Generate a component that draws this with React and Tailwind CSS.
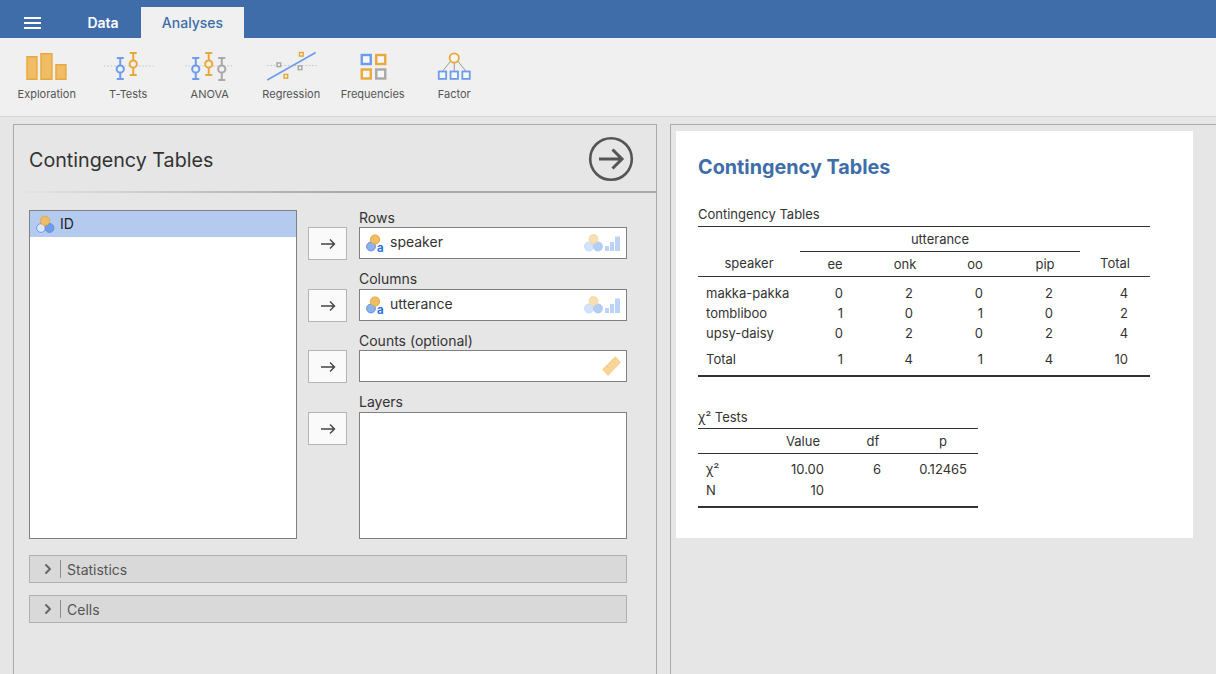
import { ChevronRight } from 'lucide-react';

const ORANGE = '#e8a93a';
const ORANGE_FILL = '#f0bd66';
const BLUE = '#6c9ceb';
const GRAY = '#a8a8a8';

function Whisker({ x, top, bottom, cy, color }) {
  return (
    <g stroke={color} strokeWidth="2" fill="#f0f0f0">
      <path d={`M${x - 3.5} ${top}h7M${x - 3.5} ${bottom}h7M${x} ${top}V${bottom}`} />
      <circle cx={x} cy={cy} r="3.6" />
    </g>
  );
}

function Dots({ x1, x2, y }) {
  return <path d={`M${x1} ${y}H${x2}`} stroke="#b9c3cf" strokeWidth="1" strokeDasharray="1.5 2" />;
}

function Box({ x, y, s, color, w = 2.4 }) {
  return <rect x={x} y={y} width={s} height={s} fill="#f6f6f6" stroke={color} strokeWidth={w} />;
}

function ExplorationIcon() {
  return (
    <svg width="60" height="32" viewBox="16.75 50 60 32">
      <g fill={ORANGE_FILL} stroke={ORANGE} strokeWidth="1.4">
        <rect x="26.7" y="56.7" width="10" height="22.6" />
        <rect x="40.7" y="53.7" width="11" height="25.6" />
        <rect x="55.7" y="64.7" width="10" height="14.6" />
      </g>
    </svg>
  );
}

function TTestsIcon() {
  return (
    <svg width="60" height="32" viewBox="98.25 50 60 32">
      <Dots x1={104} x2={154} y={66} />
      <Whisker x={120.5} top={58} bottom={79} cy={69} color={BLUE} />
      <Whisker x={133.5} top={53} bottom={75} cy={64} color={ORANGE} />
    </svg>
  );
}

function AnovaIcon() {
  return (
    <svg width="60" height="32" viewBox="179.75 50 60 32">
      <Dots x1={185} x2={234} y={66} />
      <Whisker x={195.5} top={58} bottom={79} cy={69} color={BLUE} />
      <Whisker x={208.5} top={53} bottom={75} cy={64} color={ORANGE} />
      <Whisker x={221.5} top={58} bottom={80} cy={69} color={GRAY} />
    </svg>
  );
}

function RegressionIcon() {
  return (
    <svg width="60" height="32" viewBox="261.25 50 60 32">
      <Dots x1={267} x2={317} y={65.5} />
      <path d="M267.5 80L316 52.5" stroke={BLUE} strokeWidth="1.6" />
      <Box x={299.8} y={52.5} s={3.6} color={ORANGE} w={1.5} />
      <Box x={277.3} y={63} s={3.6} color={GRAY} w={1.5} />
      <Box x={298.5} y={66} s={3.6} color={GRAY} w={1.5} />
      <Box x={284.3} y={74.5} s={3.6} color={ORANGE} w={1.5} />
    </svg>
  );
}

function FrequenciesIcon() {
  return (
    <svg width="60" height="32" viewBox="342.75 50 60 32">
      <Box x={361.5} y={55} s={9} color={BLUE} />
      <Box x={376} y={55} s={9} color={ORANGE} />
      <Box x={361.5} y={69.5} s={9} color={ORANGE} />
      <Box x={376} y={69.5} s={9} color={GRAY} />
    </svg>
  );
}

function FactorIcon() {
  return (
    <svg width="60" height="32" viewBox="424.25 50 60 32">
      <path d="M451 61L443 71M454.5 62V71M458 61L466 71" stroke="#999" strokeWidth="1" />
      <circle cx="454.5" cy="58" r="4.6" fill="#f6f6f6" stroke={ORANGE} strokeWidth="1.8" />
      <Box x={439} y={71.5} s={7.4} color={BLUE} w={1.8} />
      <Box x={450.8} y={71.5} s={7.4} color={BLUE} w={1.8} />
      <Box x={462.6} y={71.5} s={7.4} color={BLUE} w={1.8} />
    </svg>
  );
}

function IdIcon() {
  return (
    <svg width="19" height="19" viewBox="0 0 19 19" className="shrink-0">
      <circle cx="5" cy="13" r="4.4" fill="#dbe6f9" stroke={BLUE} strokeWidth="1" />
      <circle cx="13.5" cy="13" r="4.4" fill={BLUE} stroke="#5b8de0" strokeWidth="1" />
      <circle cx="9" cy="5.8" r="4.6" fill={ORANGE_FILL} stroke={ORANGE} strokeWidth="1" />
    </svg>
  );
}

function NominalTextIcon() {
  return (
    <svg width="19" height="19" viewBox="0 0 19 19" className="shrink-0">
      <circle cx="5" cy="12.5" r="4.4" fill="#8db4f2" stroke="#5b8de0" strokeWidth="1" />
      <circle cx="9" cy="5.5" r="4.6" fill={ORANGE_FILL} stroke={ORANGE} strokeWidth="1" />
      <text x="11" y="17.5" fontSize="11.5" fontWeight="700" fill="#2f73d9" fontFamily="Inter, sans-serif">a</text>
    </svg>
  );
}

function AllowedTypesIcon() {
  return (
    <svg width="37" height="18" viewBox="0 0 37 18" className="shrink-0">
      <circle cx="5" cy="12.5" r="4.5" fill="#d5e3fa" stroke="#c3d6f6" strokeWidth="0.8" />
      <circle cx="14" cy="12.5" r="4.5" fill="#b4cdf5" stroke="#a9c5f2" strokeWidth="0.8" />
      <circle cx="9.5" cy="5" r="4.5" fill="#f8dfb2" stroke="#f4d59d" strokeWidth="0.8" />
      <path d="M21 17V12h4v5zM26 17V8h4v9zM31 17V2.5h5V17z" fill="#bcd2f6" />
    </svg>
  );
}

function RulerIcon() {
  return (
    <svg width="19" height="20" viewBox="0 0 19 20" className="shrink-0">
      <path d="M0.5 13.5L13.5 0.5L18.5 6.5L6 19.5z" fill="#f8d596" stroke="#f4cb80" strokeWidth="0.6" />
      <path d="M4.5 9.5l2 2M7 7l1.5 1.5M9.5 4.5l2 2M12 2.5l1.5 1.5" stroke="#eebf6d" strokeWidth="0.6" />
    </svg>
  );
}

function RunArrow() {
  return (
    <svg width="46" height="46" viewBox="0 0 46 46">
      <circle cx="23" cy="23" r="20.8" fill="none" stroke="#555" strokeWidth="2.6" />
      <path d="M11 23H34M24.5 13.5L34 23L24.5 32.5" fill="none" stroke="#555" strokeWidth="3" />
    </svg>
  );
}

function TransferButton() {
  return (
    <button className="flex h-[33px] w-[39px] items-center justify-center border border-[#b4b4b4] bg-[#fafafa]">
      <svg width="16" height="12" viewBox="0 0 16 12" fill="none" stroke="#444" strokeWidth="1.4">
        <path d="M1 6H14.5M10 1.5L14.5 6L10 10.5" />
      </svg>
    </button>
  );
}

function TargetRow({ label, children, className, boxClass, labelClass = 'leading-[15px]' }) {
  return (
    <div className={className}>
      <div className={`h-[17px] pl-[51px] text-[14px] text-[#333] ${labelClass}`}>{label}</div>
      <div className="flex items-start gap-[12px]">
        <TransferButton />
        <div className={`flex w-[268px] items-center border border-[#808080] bg-white pl-[6px] pr-[5px] ${boxClass}`}>
          {children}
        </div>
      </div>
    </div>
  );
}

function Accordion({ label, className }) {
  return (
    <div className={`flex h-[28px] w-[598px] items-center border border-[#b0b0b0] bg-[#d9d9d9] text-[#555] ${className}`}>
      <ChevronRight size={16} strokeWidth={3} className="ml-[10px] text-[#666]" />
      <div className="ml-[4px] h-[18px] w-px bg-[#8c8c8c]"></div>
      <span className="ml-[6px] text-[14px]">{label}</span>
    </div>
  );
}

const ribbon = [
  { label: 'Exploration', icon: <ExplorationIcon /> },
  { label: 'T-Tests', icon: <TTestsIcon /> },
  { label: 'ANOVA', icon: <AnovaIcon /> },
  { label: 'Regression', icon: <RegressionIcon /> },
  { label: 'Frequencies', icon: <FrequenciesIcon /> },
  { label: 'Factor', icon: <FactorIcon /> },
];

const rows = [
  ['makka-pakka', 0, 2, 0, 2, 4],
  ['tombliboo', 1, 0, 1, 0, 2],
  ['upsy-daisy', 0, 2, 0, 2, 4],
];

function CountCells({ values }) {
  return values.map((v, i) => (
    <td key={i} className={`text-right ${i === 4 ? 'pr-[22px]' : 'pr-[27px]'}`}>{v}</td>
  ));
}

function ContingencyTable() {
  return (
    <table className="w-[452px] table-fixed border-collapse text-[13px] text-[#333]">
      <colgroup>
        <col className="w-[102px]" />
        <col className="w-[70px]" />
        <col className="w-[70px]" />
        <col className="w-[70px]" />
        <col className="w-[70px]" />
        <col className="w-[70px]" />
      </colgroup>
      <thead className="font-normal">
        <tr className="h-[25px] border-t border-[#333]">
          <th rowSpan={2} className="pb-[3px] align-bottom font-normal">speaker</th>
          <th colSpan={4} className="border-b border-[#333] pt-[1px] font-normal">utterance</th>
          <th rowSpan={2} className="pb-[3px] align-bottom font-normal">Total</th>
        </tr>
        <tr className="h-[25px] border-b border-[#333]">
          {['ee', 'onk', 'oo', 'pip'].map((h) => (
            <th key={h} className="pt-[1px] font-normal">{h}</th>
          ))}
        </tr>
      </thead>
      <tbody>
        {rows.map(([name, ...values], i) => (
          <tr key={name} className={i === 0 ? 'h-[27px] align-bottom' : 'h-[20px] align-bottom'}>
            <td className="pl-[8px]">{name}</td>
            <CountCells values={values} />
          </tr>
        ))}
        <tr className="h-[32px] border-b-2 border-[#333] align-bottom">
          <td className="pb-[5px] pl-[8px]">Total</td>
          {[1, 4, 1, 4, 10].map((v, i) => (
            <td key={i} className={`pb-[5px] text-right ${i === 4 ? 'pr-[22px]' : 'pr-[27px]'}`}>{v}</td>
          ))}
        </tr>
      </tbody>
    </table>
  );
}

function TestsTable() {
  return (
    <table className="w-[280px] table-fixed border-collapse text-[13px] text-[#333]">
      <colgroup>
        <col className="w-[73px]" />
        <col className="w-[64px]" />
        <col className="w-[57px]" />
        <col className="w-[86px]" />
      </colgroup>
      <thead>
        <tr className="h-[25px] border-y border-[#333]">
          <th></th>
          <th className="px-[11px] pt-[3px] font-normal">Value</th>
          <th className="pl-[30px] pr-[11px] pt-[3px] font-normal">df</th>
          <th className="pl-[27px] pr-[11px] pt-[3px] font-normal">p</th>
        </tr>
      </thead>
      <tbody>
        <tr className="h-[26px] align-bottom">
          <td className="pl-[8px]">χ²</td>
          <td className="pr-[11px] text-right">10.00</td>
          <td className="pr-[11px] text-right">6</td>
          <td className="pr-[11px] text-right">0.12465</td>
        </tr>
        <tr className="h-[21px] border-0 align-bottom">
          <td className="pl-[8px]">N</td>
          <td className="pr-[11px] text-right">10</td>
          <td></td>
          <td></td>
        </tr>
        <tr className="h-[7px] border-b-2 border-[#333]">
          <td colSpan={4}></td>
        </tr>
      </tbody>
    </table>
  );
}

export default function App() {
  return (
    <div className="flex h-screen flex-col overflow-hidden bg-[#e6e6e6] font-['Inter',sans-serif]">
      {/* Title bar */}
      <div className="flex h-[38px] shrink-0 items-end bg-[#3e6da9]">
        <div className="mb-[9px] ml-[24px] flex h-[12px] w-[17px] flex-col justify-between">
          <div className="h-[2px] bg-white"></div>
          <div className="h-[2px] bg-white"></div>
          <div className="h-[2px] bg-white"></div>
        </div>
        <div className="ml-[23px] flex h-[31px] w-[77px] items-center justify-center pl-[1px] text-[14px] font-semibold text-white">Data</div>
        <div className="flex h-[31px] w-[103px] items-center justify-center bg-[#f0f0f0] text-[14px] font-medium text-[#3e6da9]">Analyses</div>
      </div>

      {/* Ribbon */}
      <div className="flex h-[79px] shrink-0 border-b border-[#d4d4d4] bg-[#f0f0f0] pl-[6px] pt-[12px]">
        {ribbon.map((item) => (
          <div key={item.label} className="flex w-[81.5px] flex-col items-center">
            {item.icon}
            <span className="mt-[4px] text-[11px] leading-[16px] text-[#555]">{item.label}</span>
          </div>
        ))}
      </div>

      <div className="flex min-h-0 flex-1 pt-[7px]">
        {/* Options panel */}
        <div className="ml-[13px] w-[644px] shrink-0 border-x border-t border-[#aaaaaa]">
          <div className="flex h-[66px] items-center justify-between pl-[15px] pr-[22px] pt-[2px]">
            <h1 className="pt-[3px] text-[19.7px] font-normal text-[#333]">Contingency Tables</h1>
            <RunArrow />
          </div>
          <div className="h-[2px] bg-gradient-to-r from-[#e6e6e6] via-[#aaaaaa] to-[#aaaaaa]"></div>

          <div className="pl-[15px] pt-[17px]">
            <div className="flex">
              <div className="h-[329px] w-[268px] shrink-0 border border-[#808080] bg-white">
                <div className="flex h-[26px] items-center gap-[5px] bg-[#b5caef] pl-[6px] text-[14px] text-[#222]">
                  <IdIcon />
                  <span className="pb-[1px]">ID</span>
                </div>
              </div>
              <div className="ml-[11px] flex flex-col">
                <TargetRow label="Rows" boxClass="h-[32px] justify-between">
                  <span className="flex items-center gap-[5px] text-[14px] text-[#333]"><NominalTextIcon /><span className="pb-[4px]">speaker</span></span>
                  <AllowedTypesIcon />
                </TargetRow>
                <TargetRow label="Columns" className="mt-[12px]" labelClass="leading-[13px]" boxClass="h-[32px] justify-between">
                  <span className="flex items-center gap-[5px] text-[14px] text-[#333]"><NominalTextIcon /><span className="pb-[4px]">utterance</span></span>
                  <AllowedTypesIcon />
                </TargetRow>
                <TargetRow label="Counts (optional)" className="mt-[11px]" boxClass="h-[32px] justify-end">
                  <RulerIcon />
                </TargetRow>
                <TargetRow label="Layers" className="mt-[12px]" labelClass="leading-[13px]" boxClass="h-[127px]" />
              </div>
            </div>
            <Accordion label="Statistics" className="mt-[16px]" />
            <Accordion label="Cells" className="mt-[12px]" />
          </div>
        </div>

        {/* Results panel */}
        <div className="ml-[13px] flex-1 border-l border-t border-[#aaaaaa] pl-[5px] pt-[6px]">
          <div className="h-[407px] w-[517px] bg-white pl-[22px] pt-[23px]">
            <h2 className="text-[19.8px] font-bold leading-[26px] text-[#3e6da9]">Contingency Tables</h2>
            <div className="mt-[26px] h-[20px] text-[13px] leading-[17px] text-[#333]">Contingency Tables</div>
            <ContingencyTable />
            <div className="mt-[32px] h-[19px] text-[13px] leading-[17px] text-[#333]">χ² Tests</div>
            <TestsTable />
          </div>
        </div>
      </div>
    </div>
  );
}
